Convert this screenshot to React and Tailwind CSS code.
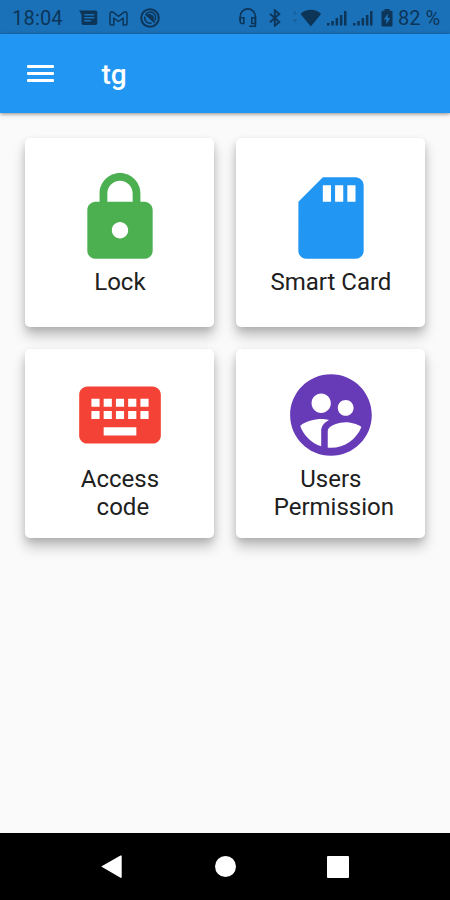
import { MdLock, MdSdCard, MdKeyboard, MdSupervisedUserCircle } from 'react-icons/md';

const MENU_ITEMS = [
  { key: 'lock', label: 'Lock', icon: MdLock, color: 'text-[#4caf50]' },
  { key: 'card', label: 'Smart Card', icon: MdSdCard, color: 'text-[#2196f3]' },
  { key: 'code', label: 'Access\n code', icon: MdKeyboard, color: 'text-[#f44336]' },
  { key: 'users', label: 'Users\n Permission', icon: MdSupervisedUserCircle, color: 'text-[#673ab7]' },
];

const MessageIcon = () => (
  <svg width="19" height="16" viewBox="0 0 19 16" fill="currentColor">
    <path fillRule="evenodd" d="M0 .5h16.500a1.800 1.800 0 0 1 1.800 1.800v11a1.800 1.800 0 0 1-1.800 1.800H4.300a1.800 1.800 0 0 1-1.800-1.800V4.500zM5.300 4v1.500h10V4zm0 3v1.500h10V7zm0 3v1.500h6.500V10z" />
  </svg>
);

const MailIcon = () => (
  <svg width="19" height="15" viewBox="0 0 19 15" fill="none" stroke="currentColor" strokeWidth="1.500" strokeLinejoin="round">
    <path d="M1 2.800C1 .9 2.900.3 4.300 1.400L9.500 5.300l5.200-3.900C16.100.3 18 .9 18 2.800v10.300a1 1 0 0 1-1 1h-2.800V7L9.500 10.500 4.800 7v7.100H2a1 1 0 0 1-1-1z" />
  </svg>
);

const BlockedIcon = () => (
  <svg width="20" height="20" viewBox="0 0 20 20" fill="none" stroke="currentColor">
    <circle cx="10" cy="10" r="8.800" strokeWidth="2" />
    <path d="M14.600 12.500A5.300 5.300 0 0 0 6 6.300M4.900 8.500a5.300 5.300 0 0 0 6.600 6.500" strokeWidth="1.500" />
    <path d="M6.500 7.500C8 5.300 12 5 14 9.200l-.5 3.600z" fill="currentColor" stroke="none" />
    <path d="M5.500 6.200l9.500 8.500" strokeWidth="1.600" />
  </svg>
);

const HeadsetIcon = () => (
  <svg width="18" height="20" viewBox="0 0 18 20" fill="none" stroke="currentColor" strokeWidth="1.600">
    <path d="M1.200 13V8.500a7.600 7.600 0 0 1 15.200 0V18.300H10" />
    <path d="M1.200 9.800h3.600v5.700H3a1.800 1.800 0 0 1-1.800-1.800zM16.400 9.800h-3.600v5.700h3.600z" />
  </svg>
);

const BluetoothIcon = () => (
  <svg width="12" height="18" viewBox="0 0 12 18" fill="none" stroke="currentColor" strokeWidth="1.900">
    <path d="M1 4.800l9.300 8.200-4.500 3.700V1.300L10.300 5 1 13.200" />
  </svg>
);

const WifiIcon = () => (
  <svg width="30" height="18" viewBox="0 0 30 18" fill="currentColor">
    <path d="M1 5.500l2-4 2 4zM1 10l2 4 2-4z" opacity="0.25" />
    <path d="M8.500 5C11.500 2 15 .8 18.800.8S26.100 2 29.100 5L18.800 17.600z" />
  </svg>
);

const SignalIcon = () => (
  <svg width="20" height="15" viewBox="0 0 20 15" fill="currentColor">
    <path d="M0 12h2.500v2.500H0zM4.300 10h2.500v4.500H4.300zM8.600 7h2.500v7.500H8.600zM12.900 4h2.500v10.500h-2.500zM17 0h2.500v14.500H17z" />
  </svg>
);

const BatteryIcon = () => (
  <svg width="12" height="18" viewBox="0 0 12 18" fill="currentColor">
    <path fillRule="evenodd" d="M3.500 0h5v1.800h1.700A1.300 1.300 0 0 1 11.500 3.100v13.100a1.300 1.300 0 0 1-1.300 1.300H1.800A1.300 1.300 0 0 1 .5 16.200V3.100A1.300 1.300 0 0 1 1.800 1.800h1.700zM6.800 4.500L2.800 10.600h2.500v4.600l4-6.200H6.800z" />
  </svg>
);

const StatusBar = () => (
  <div className="flex h-[34px] items-center bg-[#1b71b8] pt-0.5 text-[#0c3558]">
    <span className="ml-3 w-[67px] text-[20px] leading-none tracking-[0.2px]">18:04</span>
    <MessageIcon />
    <span className="ml-[11px]"><MailIcon /></span>
    <span className="ml-3"><BlockedIcon /></span>
    <div className="ml-auto flex items-center">
      <HeadsetIcon />
      <span className="ml-3"><BluetoothIcon /></span>
      <span className="ml-[11px]"><WifiIcon /></span>
      <span className="ml-[5px]"><SignalIcon /></span>
      <span className="ml-[6px]"><SignalIcon /></span>
      <span className="ml-[8px]"><BatteryIcon /></span>
      <span className="ml-[5px] mr-[10px] w-[42px] whitespace-nowrap text-[20px] leading-none">82 %</span>
    </div>
  </div>
);

const AppBar = ({ title }) => (
  <header className="relative flex h-[79px] items-center bg-[#2196f3] text-white shadow-[0_1px_4px_rgba(0,0,0,0.45)]">
    <button className="ml-[26.500px] flex w-[27px] flex-col gap-[3.500px]" aria-label="Menu">
      <span className="h-[3.500px] w-full rounded-[1px] bg-white" />
      <span className="h-[3.500px] w-full rounded-[1px] bg-white" />
      <span className="h-[3.500px] w-full rounded-[1px] bg-white" />
    </button>
    <h1 className="ml-[48px] pt-0.5 text-[28px] font-medium leading-8">{title}</h1>
  </header>
);

const MenuCard = ({ label, icon: Icon, color }) => (
  <button className="flex h-[189px] w-[189px] flex-col items-center rounded-[5px] bg-white pt-[31px] shadow-[0_9px_13px_rgba(0,0,0,0.22),0_3px_7px_rgba(0,0,0,0.13)] last:pt-[17px] nth-3:pt-[17px]">
    <Icon size={98} className={color} />
    <span className="whitespace-pre pt-px text-center text-[24px] leading-7 text-[#202020]">{label}</span>
  </button>
);

const NavBar = () => (
  <nav className="flex h-[67px] items-center bg-black">
    <svg width="22" height="26" viewBox="0 0 22 26" fill="#fff" className="ml-[100px]">
      <path d="M1.200 12.600L20.500 1.600a.8.800 0 0 1 1.200.7v20.800a.8.800 0 0 1-1.200.7z" />
    </svg>
    <div className="ml-[93px] size-[21px] rounded-full bg-white" />
    <div className="ml-[91px] size-[22px] rounded-[1px] bg-white" />
  </nav>
);

export default function App() {
  return (
    <div className="flex h-[900px] w-[450px] flex-col overflow-hidden bg-[#fafafa] font-[Roboto,sans-serif]">
      <StatusBar />
      <AppBar title="tg" />
      <main className="grid flex-1 grid-cols-[189px_189px] content-start gap-x-[22px] gap-y-[22px] pl-[25.400px] pt-[25px]">
        {MENU_ITEMS.map(({ key, ...item }) => (
          <MenuCard key={key} {...item} />
        ))}
      </main>
      <NavBar />
    </div>
  );
}
